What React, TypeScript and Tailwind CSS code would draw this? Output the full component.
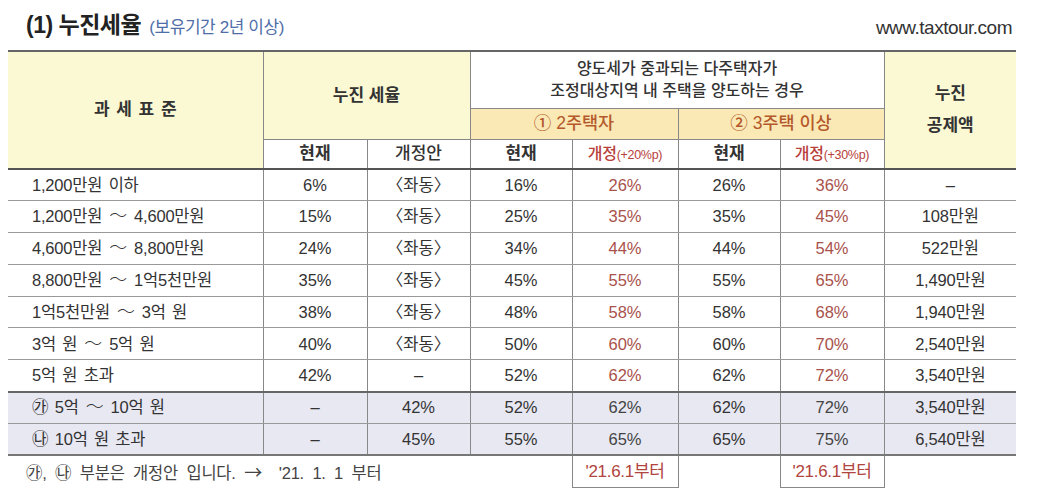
import React from "react";

const FONT = { fontFamily: '"Liberation Sans", "Noto Sans CJK KR", sans-serif' };

type Row = {
  label: string;
  cur: string;
  rev: string;
  a: string;
  ar: string;
  b: string;
  br: string;
  ded: string;
  lav?: boolean;
};

const rows: Row[] = [
  { label: "1,200만원 이하", cur: "6%", rev: "〈좌동〉", a: "16%", ar: "26%", b: "26%", br: "36%", ded: "–" },
  { label: "1,200만원 ~ 4,600만원", cur: "15%", rev: "〈좌동〉", a: "25%", ar: "35%", b: "35%", br: "45%", ded: "108만원" },
  { label: "4,600만원 ~ 8,800만원", cur: "24%", rev: "〈좌동〉", a: "34%", ar: "44%", b: "44%", br: "54%", ded: "522만원" },
  { label: "8,800만원 ~ 1억5천만원", cur: "35%", rev: "〈좌동〉", a: "45%", ar: "55%", b: "55%", br: "65%", ded: "1,490만원" },
  { label: "1억5천만원 ~ 3억 원", cur: "38%", rev: "〈좌동〉", a: "48%", ar: "58%", b: "58%", br: "68%", ded: "1,940만원" },
  { label: "3억 원 ~ 5억 원", cur: "40%", rev: "〈좌동〉", a: "50%", ar: "60%", b: "60%", br: "70%", ded: "2,540만원" },
  { label: "5억 원 초과", cur: "42%", rev: "–", a: "52%", ar: "62%", b: "62%", br: "72%", ded: "3,540만원" },
  { label: "㉮ 5억 ~ 10억 원", cur: "–", rev: "42%", a: "52%", ar: "62%", b: "62%", br: "72%", ded: "3,540만원", lav: true },
  { label: "㉯ 10억 원 초과", cur: "–", rev: "45%", a: "55%", ar: "65%", b: "65%", br: "75%", ded: "6,540만원", lav: true },
];

function Label({ text }: { text: string }) {
  const parts = text.split(" ~ ");
  if (parts.length === 1) return <>{text}</>;
  return (
    <>
      {parts[0]}
      <span className="inline-block px-[7px] text-[18px] font-light leading-none">～</span>
      {parts[1]}
    </>
  );
}

export default function App() {
  return (
    <div className="w-[1040px] h-[490px] bg-white overflow-hidden text-[#333]" style={FONT}>
      <div className="flex items-end justify-between pl-[26px] pr-[28px] h-[44px] pb-[2px]">
        <div className="flex items-baseline gap-[8px]">
          <span className="text-[23px] font-bold text-[#222] tracking-[-0.5px]">(1) 누진세율</span>
          <span className="text-[17px] text-[#4f6ea8] tracking-[-0.4px]">(보유기간 2년 이상)</span>
        </div>
        <span className="text-[19px] text-[#333] tracking-[-0.5px]">www.taxtour.com</span>
      </div>
      <div className="h-[6px]" />
      <table className="ml-[8px] w-[1008px] table-fixed border-collapse text-[16.5px]">
        <colgroup>
          <col className="w-[255px]" />
          <col className="w-[104px]" />
          <col className="w-[103px]" />
          <col className="w-[102px]" />
          <col className="w-[106px]" />
          <col className="w-[102px]" />
          <col className="w-[104px]" />
          <col className="w-[132px]" />
        </colgroup>
        <thead>
          <tr className="h-[57px] border-t-2 border-t-[#666]">
            <th rowSpan={3} className="bg-[#fbf9d3] text-[17px] font-semibold text-[#333] border-r border-r-[#888] border-b-2 border-b-[#555] [word-spacing:2px]">
              과 세 표 준
            </th>
            <th colSpan={2} rowSpan={2} className="bg-[#fbf9d3] text-[17px] font-semibold text-[#333] border-r border-r-[#888] border-b border-b-[#888]">
              누진 세율
            </th>
            <th colSpan={4} className="bg-white text-[16px] font-medium text-[#333] leading-[22px] border-r border-r-[#888] border-b border-b-[#888]">
              양도세가 중과되는 다주택자가
              <br />
              조정대상지역 내 주택을 양도하는 경우
            </th>
            <th rowSpan={3} className="bg-[#fbf9d3] text-[17px] font-semibold text-[#333] leading-[32px] border-b-2 border-b-[#555]">
              누진
              <br />
              공제액
            </th>
          </tr>
          <tr className="h-[31px]">
            <th colSpan={2} className="bg-[#fbe9b5] text-[17.5px] font-medium text-[#b4592c] border-r border-r-[#888] border-b border-b-[#888]">
              ① 2주택자
            </th>
            <th colSpan={2} className="bg-[#fbe9b5] text-[17.5px] font-medium text-[#b4592c] border-r border-r-[#888] border-b border-b-[#888]">
              ② 3주택 이상
            </th>
          </tr>
          <tr className="h-[30px]">
            <th className="bg-white text-[17px] font-semibold border-r border-r-[#888] border-b-2 border-b-[#555]">현재</th>
            <th className="bg-white text-[17px] font-medium border-r border-r-[#888] border-b-2 border-b-[#555]">개정안</th>
            <th className="bg-white text-[17px] font-semibold border-r border-r-[#888] border-b-2 border-b-[#555]">현재</th>
            <th className="bg-white text-[16px] font-medium text-[#b8403a] border-r border-r-[#888] border-b-2 border-b-[#555] whitespace-nowrap tracking-[-0.3px]">
              개정<span className="text-[12.5px]">(+20%p)</span>
            </th>
            <th className="bg-white text-[17px] font-semibold border-r border-r-[#888] border-b-2 border-b-[#555]">현재</th>
            <th className="bg-white text-[16px] font-medium text-[#b8403a] border-r border-r-[#888] border-b-2 border-b-[#555] whitespace-nowrap tracking-[-0.3px]">
              개정<span className="text-[12.5px]">(+30%p)</span>
            </th>
          </tr>
        </thead>
        <tbody>
          {rows.map((r, i) => {
            const bg = r.lav ? "bg-[#e8e8f2]" : "bg-white";
            const bottom =
              i === 6
                ? "border-b-2 border-b-[#666]"
                : i === rows.length - 1
                ? "border-b-2 border-b-[#777]"
                : "border-b border-b-[#999]";
            const cell = `${bg} ${bottom} border-r border-r-[#888] text-center`;
            const red = r.lav ? "text-[#444]" : "text-[#a9514b]";
            return (
              <tr key={i} className="h-[31.8px]">
                <td className={`${bg} ${bottom} border-r border-r-[#888] pl-[24px] text-left text-[#333] whitespace-nowrap tracking-[-0.2px] [word-spacing:2px]`}>
                  <Label text={r.label} />
                </td>
                <td className={cell}>{r.cur}</td>
                <td className={cell}>{r.rev}</td>
                <td className={cell}>{r.a}</td>
                <td className={`${cell} ${red}`}>{r.ar}</td>
                <td className={cell}>{r.b}</td>
                <td className={`${cell} ${red}`}>{r.br}</td>
                <td className={`${bg} ${bottom} text-center tracking-[-0.2px]`}>{r.ded}</td>
              </tr>
            );
          })}
          <tr className="h-[32px]">
            <td colSpan={3} className="pl-[18px] text-left text-[16.5px] text-[#444] whitespace-nowrap tracking-[-0.2px] [word-spacing:4px]">
              ㉮, ㉯ 부분은 개정안 입니다. <span className="text-[18px]" style={{ fontFamily: '"Noto Sans CJK KR", sans-serif' }}>→</span> &nbsp;'21. 1. 1 부터
            </td>
            <td />
            <td className="border-x border-x-[#888] border-b border-b-[#888] text-center text-[17px] text-[#b0443e] tracking-[-0.3px]">'21.6.1부터</td>
            <td />
            <td className="border-x border-x-[#888] border-b border-b-[#888] text-center text-[17px] text-[#b0443e] tracking-[-0.3px]">'21.6.1부터</td>
            <td />
          </tr>
        </tbody>
      </table>
    </div>
  );
}
